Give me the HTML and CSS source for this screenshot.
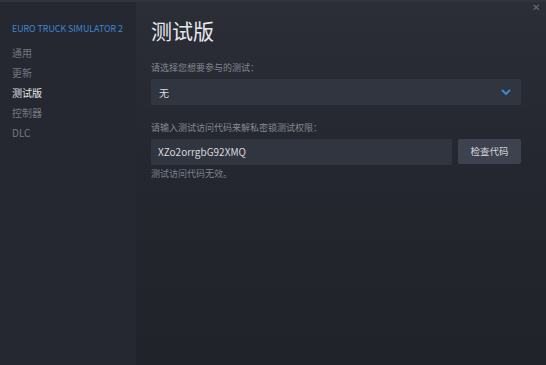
FILE: index.html
```html
<!DOCTYPE html>
<html lang="zh-CN">
<head>
    <meta charset="UTF-8">
    <title>测试版</title>
    <link rel="stylesheet" href="styles.css">
</head>
<body>
    <div class="window">
        <nav class="sidebar">
            <div class="game">EURO TRUCK SIMULATOR 2</div>
            <a class="nav-item">通用</a>
            <a class="nav-item">更新</a>
            <a class="nav-item active">测试版</a>
            <a class="nav-item">控制器</a>
            <a class="nav-item">DLC</a>
        </nav>
        <main class="content">
            <span class="close">&#x2715;</span>
            <h1>测试版</h1>
            <div class="label">请选择您想要参与的测试：</div>
            <div class="select">
                <span>无</span>
                <svg class="chevron" width="10" height="6" viewBox="0 0 10 6">
                    <path d="M1 1 L5 5 L9 1" fill="none" stroke="#3b8ed8" stroke-width="1.8"/>
                </svg>
            </div>
            <div class="label second">请输入测试访问代码来解私密锁测试权限：</div>
            <div class="code-row">
                <div class="input">XZo2orrgbG92XMQ</div>
                <div class="button">检查代码</div>
            </div>
            <div class="error">测试访问代码无效。</div>
        </main>
    </div>
</body>
</html>
```
FILE: styles.css
```css
html, body {
    margin: 0;
    height: 100%;
}
body {
    font-family: "Noto Sans CJK SC", "Noto Sans", sans-serif;
    background: #23262e;
}
.window {
    display: flex;
    height: 365px;
    border-top: 2px solid #2f3440;
    box-sizing: border-box;
}
.sidebar {
    width: 136px;
    flex-shrink: 0;
    background: #252830;
    padding: 20px 0 0 12px;
    box-sizing: border-box;
    display: flex;
    flex-direction: column;
}
.game {
    color: #3d86d3;
    font-size: 8.9px;
    letter-spacing: -0.05px;
    margin-bottom: 7px;
    line-height: 14px;
}
.nav-item {
    color: #737882;
    font-size: 10px;
    line-height: 19.9px;
}
.nav-item.active {
    color: #e4e6ea;
}
.content {
    position: relative;
    flex: 1;
    padding: 13px 25px 0 15px;
    background: linear-gradient(180deg, #2b2e37 0%, #24272f 45%, #202329 100%);
}
.close {
    position: absolute;
    top: -3px;
    right: 6px;
    color: #6d727c;
    font-size: 10px;
}
h1 {
    margin: 0;
    color: #e6e8eb;
    font-size: 21px;
    font-weight: 400;
    line-height: 30px;
}
.label {
    margin-top: 16px;
    color: #848993;
    font-size: 9px;
    line-height: 13px;
}
.label.second {
    margin-top: 16px;
}
.select {
    margin-top: 5px;
    height: 26px;
    background: #31353f;
    display: flex;
    align-items: center;
    justify-content: space-between;
    padding: 0 10px 0 8px;
    color: #d8dadf;
    font-size: 10px;
}
.code-row {
    margin-top: 5px;
    display: flex;
    gap: 6px;
}
.input {
    flex: 1;
    height: 26px;
    background: #31353f;
    color: #d8dadf;
    font-size: 10px;
    line-height: 26px;
    padding-left: 7px;
}
.button {
    width: 63px;
    height: 25px;
    background: #3d424e;
    color: #d3d6dc;
    font-size: 9.5px;
    line-height: 25px;
    text-align: center;
    border-radius: 2px;
}
.error {
    margin-top: 2px;
    color: #7f848e;
    font-size: 9px;
    line-height: 14px;
}
```
